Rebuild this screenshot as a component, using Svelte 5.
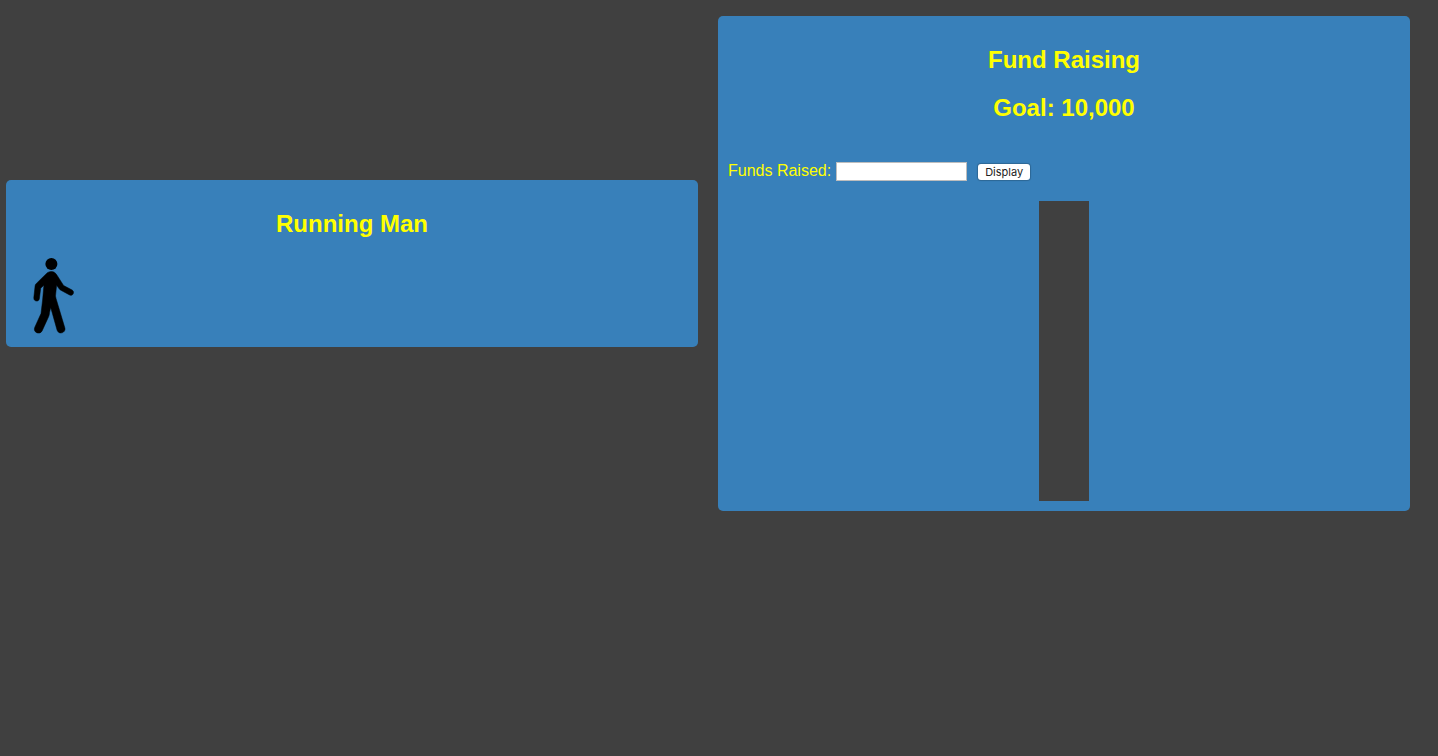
<script>
  const goal = 10000;
  let entry = $state('');
  let raised = $state(0);
  let level = $derived(Math.max(0, Math.min(100, (raised / goal) * 100)));

  function display(event) {
    event.preventDefault();
    raised = Number(entry) || 0;
  }
</script>

<main>
  <section class="panel">
    <h2>Running Man</h2>
    <svg class="runner" viewBox="0 0 70 79" role="img" aria-label="Walking figure">
      <circle cx="35.4" cy="6" r="6" />
      <path stroke="#000" stroke-width="0.5" d="M35.4 13.5C33 13.5 31.6 14.5 30.3 15.7L20.4 25.4C19.6 26.2 19.2 26.7 19.1 27.8L17.8 39.8C17.5 43.8 22.9 44.2 23.4 40.7L24.7 30.2L27.9 27.2L26.6 42L25 55.5L18.7 69.4C16.7 74.4 23.7 77.4 26.1 72.9L32.7 58.5Q33.4 56.9 33.5 54.8L34.7 49.4L41.1 72.2C42.8 77.1 50 75 48.9 70.1L40.1 40.7L39.5 38L40.6 27.3L43 30.6C43.5 31.3 44 31.8 44.8 32.2L53.6 37C56.8 38.6 59.2 33.8 56.1 32L47.6 27.5L41 17.2C39.5 14.8 38 13.5 35.4 13.5Z" />
    </svg>
  </section>

  <section class="panel">
    <h2>Fund Raising</h2>
    <h2>Goal: {goal.toLocaleString('en-US')}</h2>
    <form onsubmit={display}>
      <label for="funds">Funds Raised:</label>
      <input id="funds" type="text" bind:value={entry} />
      <button type="submit">Display</button>
    </form>
    <div class="gauge">
      <div class="level" style="height: {level}%"></div>
    </div>
  </section>
</main>

<style>
  :global(body) {
    margin: 0;
    background: #404040;
  }

  main {
    display: grid;
    grid-template-columns: 1fr 1fr;
    align-items: center;
    gap: 20px;
    padding: 16px 28px 16px 6px;
    color: #ffff00;
    font: 16px/18px "Liberation Sans", Arial, sans-serif;
  }

  .panel {
    display: flow-root;
    padding: 10px;
    border-radius: 5px;
    background: #3880ba;
  }

  h2 {
    margin: 20px 0;
    font-size: 24px;
    line-height: 28px;
    text-align: center;
  }

  .runner {
    display: block;
    width: 70px;
    height: 79px;
    fill: #000;
  }

  form {
    display: flex;
    align-items: center;
    margin: 40px 0 20px;
  }

  label {
    line-height: 16px;
    padding-bottom: 2px;
  }

  input {
    box-sizing: border-box;
    width: 131px;
    height: 19px;
    margin: 0 11px 0 5px;
    padding: 1px 3px;
    border: 1px solid #bdbdbd;
    border-radius: 0;
    background: #fff;
    font: 11px Inter, sans-serif;
  }

  button {
    height: 16px;
    margin: 0;
    padding: 0 7px;
    border: 0;
    border-radius: 3px;
    background: #fff;
    box-shadow: 0 0 1px 1px rgba(0, 0, 0, 0.2);
    color: #222;
    font: 11px/16px Inter, sans-serif;
  }

  .gauge {
    display: flex;
    align-items: flex-end;
    width: 50px;
    height: 300px;
    margin: 0 auto;
    background: #404040;
  }

  .level {
    width: 100%;
    background: #ffff00;
  }
</style>
